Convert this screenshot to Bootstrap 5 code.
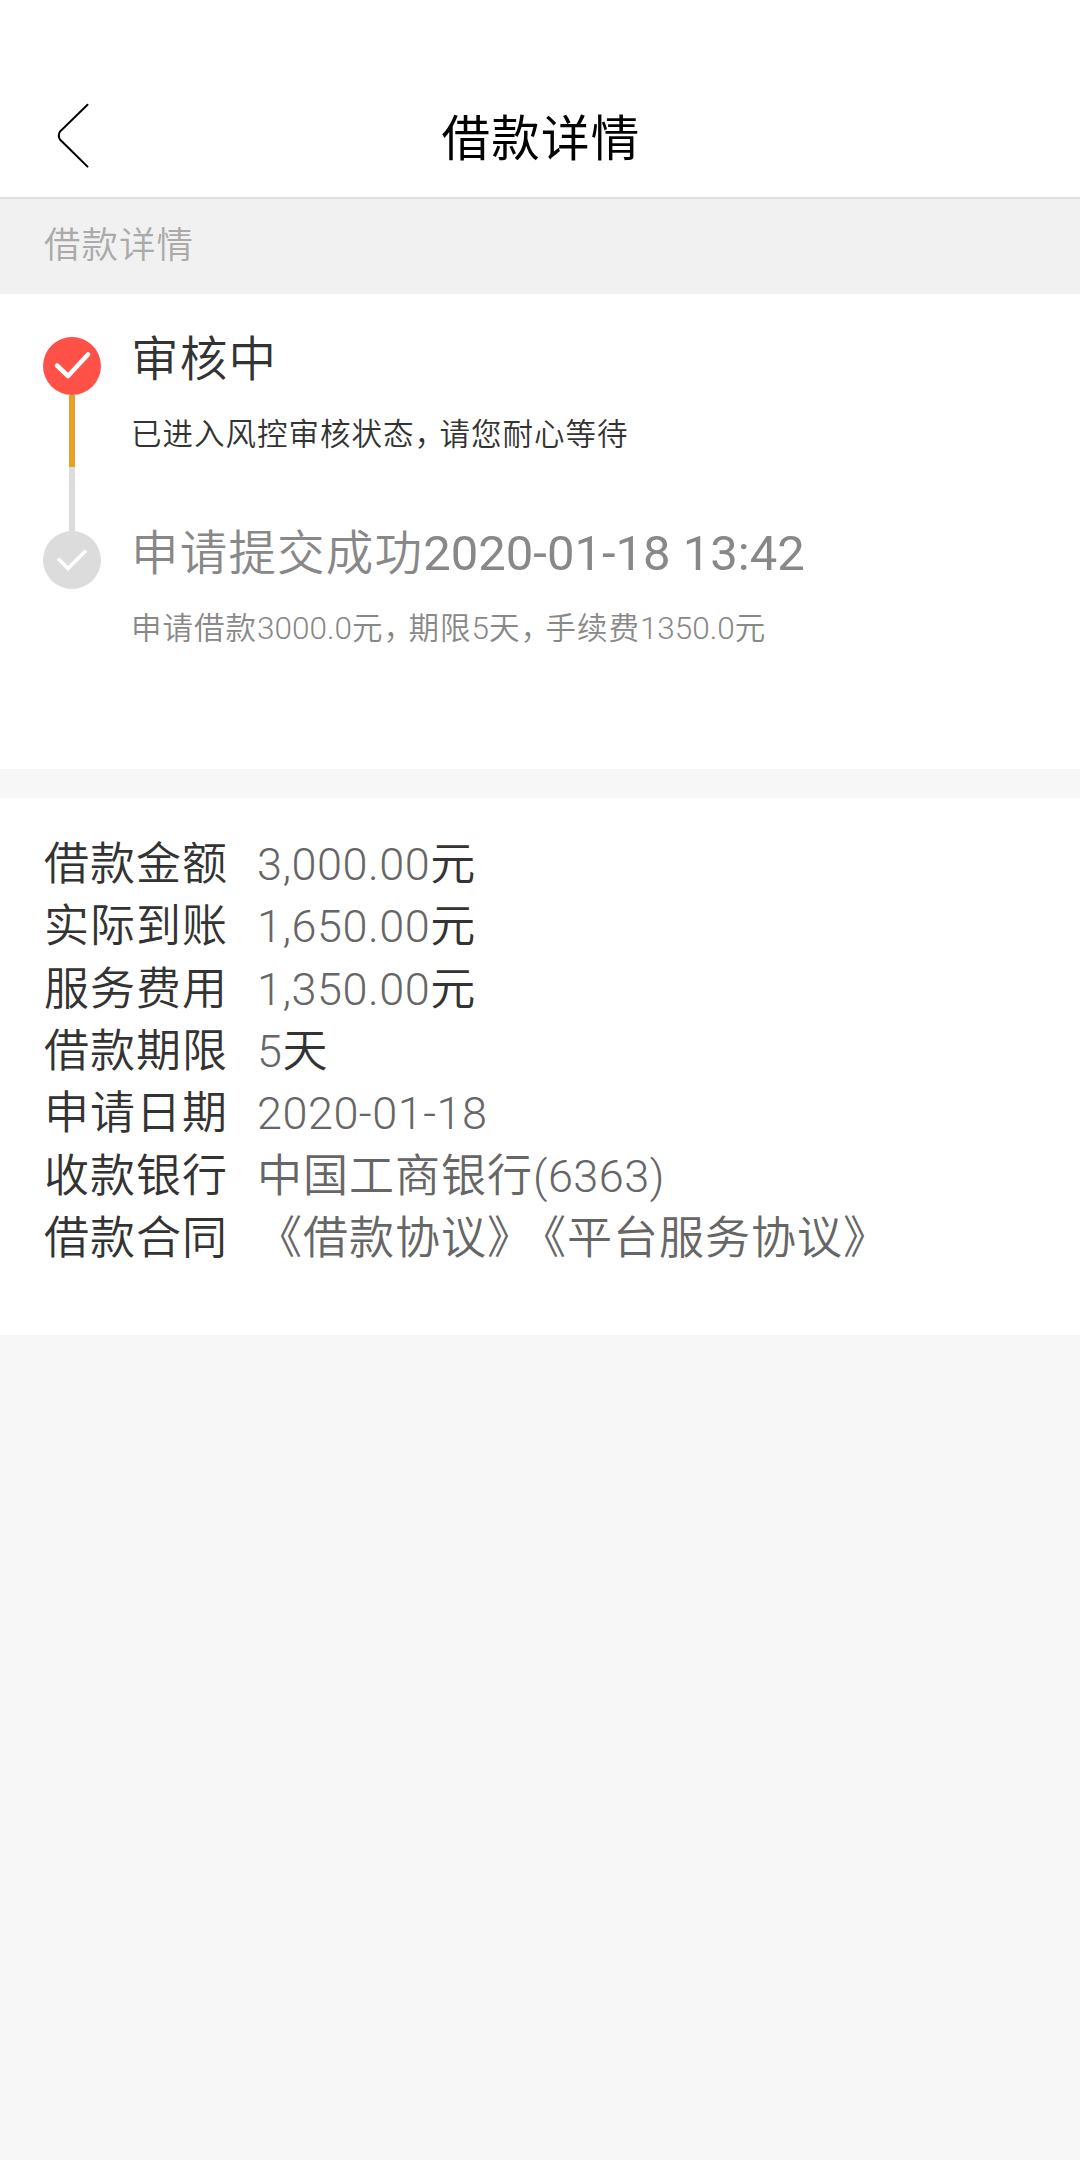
<!DOCTYPE html>
<html lang="zh-CN">
<head>
<meta charset="utf-8">
<meta name="viewport" content="width=device-width, initial-scale=1">
<title>借款详情</title>
<link href="https://cdn.jsdelivr.net/npm/bootstrap@5.3.0/dist/css/bootstrap.min.css" rel="stylesheet">
<style>
body{background:#f7f7f7;color:#333;font-family:"Noto Sans CJK SC",sans-serif;font-weight:350;white-space:nowrap}
.topbar{height:199px;padding:79px 0 0;border-bottom:2px solid #dfdfdf}
.back{width:60px;height:100px;margin-left:45px}
.topbar h1{font-size:48.5px;letter-spacing:1.3px;line-height:80px;font-weight:400;color:#000;padding-left:2px}
.side{width:105px}
.caption-bar{height:95px;background:#f1f1f1;color:#aaa;font-size:36.5px;letter-spacing:1px;line-height:88px;padding-left:44px}
.steps{height:475px;padding:43px 43px 0}
.rail{width:58px;margin-right:30px}
.dot{width:58px;height:58px}
.bar-now{width:6px;height:72px;background:#e6a226}
.bar-past{width:6px;height:64px;background:#dcdcdc}
.step{height:194px}
.step-title{font-size:47.5px;letter-spacing:1.2px;line-height:38px;height:38px}
.step-note{font-size:30.5px;letter-spacing:1px;line-height:40px;margin-top:37px}
.past{color:#888}
.num{font-family:Roboto,sans-serif;letter-spacing:0;line-height:0}
.step-title .num{font-size:49px;font-weight:400}
.step-note .num{font-size:31.5px;font-weight:300}
.comma{letter-spacing:-5.5px}
.detail{margin-top:29px;height:537px;padding:32px 44px 0}
.detail dl{font-size:45px;letter-spacing:1px;line-height:62.33px}
.detail dt{width:213px;font-weight:inherit}
.detail dd{margin:0}
.detail .num{font-size:45px;font-weight:300;color:#666;letter-spacing:.5px}
.soft{color:#666}
.wide-gap{letter-spacing:11.5px}
</style>
<script src="https://cdn.jsdelivr.net/npm/bootstrap@5.3.0/dist/js/bootstrap.bundle.min.js"></script>
</head>
<body>
<header class="topbar bg-white d-flex justify-content-between">
  <div class="side">
    <svg class="back d-block" viewBox="0 0 60 100" fill="none" stroke="#000" stroke-width="2" stroke-linecap="round"><path d="M42.5 25.8 15 52.5Q12.6 56.7 15 60.5L42.5 87.6"/></svg>
  </div>
  <h1 class="mb-0 mt-3">借款详情</h1>
  <div class="side"></div>
</header>
<div class="caption-bar">借款详情</div>
<section class="steps bg-white d-flex">
  <div class="rail d-flex flex-column align-items-center">
    <svg class="dot" viewBox="0 0 58 58"><circle cx="29" cy="29" r="29" fill="#ff5147"/><path d="M14 28.5 25 39 45 17.5" fill="none" stroke="#fff" stroke-width="4.5" stroke-linecap="round" stroke-linejoin="round"/></svg>
    <div class="bar-now"></div>
    <div class="bar-past"></div>
    <svg class="dot" viewBox="0 0 58 58"><circle cx="29" cy="29" r="29" fill="#dcdcdc"/><path d="M15 27.5 25 37.5 43 19.5" fill="none" stroke="#fff" stroke-width="3.6"/></svg>
  </div>
  <div>
    <div class="step">
      <div class="step-title">审核中</div>
      <div class="step-note">已进入风控审核状态<span class="comma">，</span>请您耐心等待</div>
    </div>
    <div class="step past">
      <div class="step-title">申请提交成功<span class="num">2020-01-18 13:42</span></div>
      <div class="step-note">申请借款<span class="num">3000.0</span>元<span class="comma">，</span>期限<span class="num">5</span>天<span class="comma">，</span>手续费<span class="num">1350.0</span>元</div>
    </div>
  </div>
</section>
<section class="detail bg-white">
  <dl class="m-0">
    <div class="d-flex"><dt>借款金额</dt><dd><span class="num">3,000.00</span>元</dd></div>
    <div class="d-flex"><dt>实际到账</dt><dd><span class="num">1,650.00</span>元</dd></div>
    <div class="d-flex"><dt>服务费用</dt><dd><span class="num">1,350.00</span>元</dd></div>
    <div class="d-flex"><dt>借款期限</dt><dd><span class="num">5</span>天</dd></div>
    <div class="d-flex"><dt>申请日期</dt><dd><span class="num">2020-01-18</span></dd></div>
    <div class="d-flex"><dt>收款银行</dt><dd class="soft">中国工商银行<span class="num">(6363)</span></dd></div>
    <div class="d-flex"><dt>借款合同</dt><dd class="soft">《借款协议<span class="wide-gap">》</span>《平台服务协议》</dd></div>
  </dl>
</section>
</body>
</html>
